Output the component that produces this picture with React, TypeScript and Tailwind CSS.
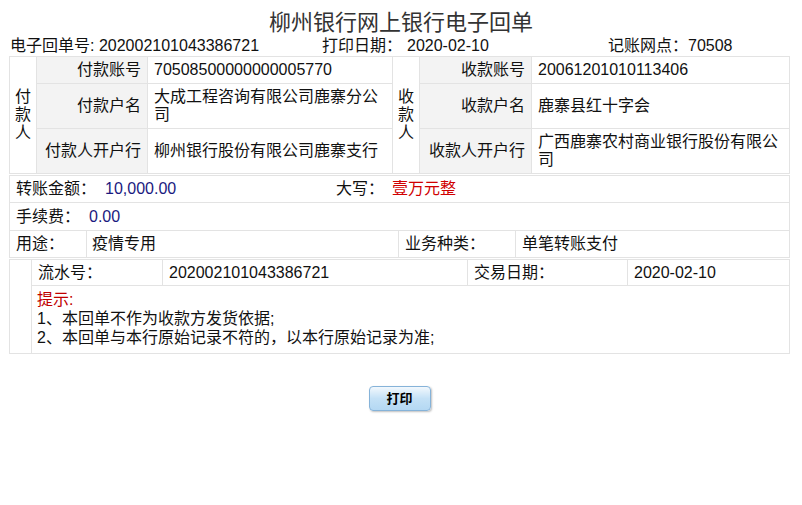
const cell = 'border border-[#e3e3e3] px-[6px] py-0 align-middle'
const label = 'border border-[#e3e3e3] bg-[#f3f3f3] px-[6px] py-0 align-middle text-right'

const Vertical = ({ text }: { text: string }) => {
  return (
    <div className="flex flex-col items-center leading-[18px]">
      {text.split('').map((c, i) => (
        <span key={i}>{c}</span>
      ))}
    </div>
  )
}

export default function App() {
  return (
    <main className="w-[802px] h-[505px] bg-white text-[16px] text-[#111] font-['Liberation_Sans','Noto_Sans_CJK_SC',sans-serif]">
      <h1 className="pt-[8px] h-[38px] leading-[30px] text-center text-[22px] font-normal text-[#333]">
        柳州银行网上银行电子回单
      </h1>

      <div className="flex h-[16px] leading-[16px] mb-[2px] whitespace-nowrap">
        <div className="w-[322px] pl-[10px]">电子回单号:&nbsp;202002101043386721</div>
        <div className="w-[286px] flex">
          <span className="w-[85px]">打印日期：</span>
          <span>2020-02-10</span>
        </div>
        <div>记账网点：70508</div>
      </div>

      {/* payer / payee */}
      <table className="ml-[9px] w-[780px] table-fixed border-collapse leading-[18px]">
        <colgroup>
          <col className="w-[27px]" />
          <col className="w-[111px]" />
          <col className="w-[245px]" />
          <col className="w-[27px]" />
          <col className="w-[112px]" />
          <col className="w-[258px]" />
        </colgroup>
        <tbody>
          <tr className="h-[27px]">
            <td rowSpan={3} className="border border-[#e3e3e3] p-0 align-middle">
              <Vertical text="付款人" />
            </td>
            <td className={label}>付款账号</td>
            <td className={cell}>70508500000000005770</td>
            <td rowSpan={3} className="border border-[#e3e3e3] p-0 align-middle">
              <Vertical text="收款人" />
            </td>
            <td className={label}>收款账号</td>
            <td className={cell}>20061201010113406</td>
          </tr>
          <tr className="h-[45px]">
            <td className={label}>付款户名</td>
            <td className={cell}>大成工程咨询有限公司鹿寨分公司</td>
            <td className={label}>收款户名</td>
            <td className={cell}>鹿寨县红十字会</td>
          </tr>
          <tr className="h-[45px]">
            <td className={label}>付款人开户行</td>
            <td className={cell}>柳州银行股份有限公司鹿寨支行</td>
            <td className={label}>收款人开户行</td>
            <td className={cell}>广西鹿寨农村商业银行股份有限公司</td>
          </tr>
        </tbody>
      </table>

      {/* amount */}
      <table className="ml-[9px] mt-[1px] w-[780px] table-fixed border-collapse leading-[18px]">
        <colgroup>
          <col className="w-[77px]" />
          <col className="w-[312px]" />
          <col className="w-[117px]" />
          <col className="w-[274px]" />
        </colgroup>
        <tbody>
          <tr className="h-[27px]">
            <td colSpan={4} className={cell}>
              <div className="flex whitespace-nowrap">
                <span className="w-[320px] flex">
                  <span className="w-[89px]">转账金额：</span>
                  <span className="text-[#1a1a80]">10,000.00</span>
                </span>
                <span className="w-[56px]">大写：</span>
                <span className="text-[#d00000]">壹万元整</span>
              </div>
            </td>
          </tr>
          <tr className="h-[28px]">
            <td colSpan={4} className={cell}>
              <span className="inline-block w-[73px]">手续费：</span>
              <span className="text-[#1a1a80]">0.00</span>
            </td>
          </tr>
          <tr className="h-[27px]">
            <td className={cell}>用途：</td>
            <td className="border border-[#e3e3e3] pl-[5px] align-middle">疫情专用</td>
            <td className={cell}>业务种类：</td>
            <td className={cell}>单笔转账支付</td>
          </tr>
        </tbody>
      </table>

      {/* serial */}
      <table className="ml-[9px] mt-[1px] w-[780px] table-fixed border-collapse leading-[19px]">
        <colgroup>
          <col className="w-[22px]" />
          <col className="w-[131px]" />
          <col className="w-[305px]" />
          <col className="w-[160px]" />
          <col className="w-[162px]" />
        </colgroup>
        <tbody>
          <tr className="h-[26px]">
            <td rowSpan={2} className="border border-[#e3e3e3] p-0"></td>
            <td className={cell}>流水号：</td>
            <td className={cell}>202002101043386721</td>
            <td className={cell}>交易日期：</td>
            <td className={cell}>2020-02-10</td>
          </tr>
          <tr className="h-[67px]">
            <td colSpan={4} className="border border-[#e3e3e3] px-[5px] pt-[4px] pb-[6px] align-top">
              <div className="text-[#c00000]">提示:</div>
              <div>1、本回单不作为收款方发货依据;</div>
              <div>2、本回单与本行原始记录不符的，以本行原始记录为准;</div>
            </td>
          </tr>
        </tbody>
      </table>

      <div className="flex justify-center pt-[32px]">
        <button
          type="button"
          className="w-[62px] h-[25px] rounded-[4px] border border-[#86b3d9] bg-gradient-to-b from-[#f2f8fd] via-[#c4e1f6] to-[#b4d8f3] text-[13px] font-bold text-black shadow-[1px_1px_2px_rgba(0,0,0,0.25)] mr-[3px]"
        >
          打印
        </button>
      </div>
    </main>
  )
}
